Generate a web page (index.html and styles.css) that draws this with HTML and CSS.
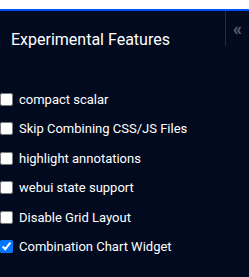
FILE: index.html
```html
<!DOCTYPE html>
<html>
<head>
<meta charset="utf-8">
<link rel="stylesheet" href="styles.css">
</head>
<body>
<div class="topbar"></div>
<div class="panel">
  <div class="header">
    <h2 class="title">Experimental Features</h2>
    <div class="divider"></div>
    <div class="collapse">«</div>
  </div>
  <ul class="features">
    <li class="feature"><input type="checkbox" class="cb"><span class="label">compact scalar</span></li>
    <li class="feature"><input type="checkbox" class="cb"><span class="label">Skip Combining CSS/JS Files</span></li>
    <li class="feature"><input type="checkbox" class="cb"><span class="label">highlight annotations</span></li>
    <li class="feature"><input type="checkbox" class="cb"><span class="label">webui state support</span></li>
    <li class="feature"><input type="checkbox" class="cb"><span class="label">Disable Grid Layout</span></li>
    <li class="feature"><input type="checkbox" class="cb" checked><span class="label">Combination Chart Widget</span></li>
  </ul>
</div>
</body>
</html>
```

FILE: styles.css
```css
html, body {
  margin: 0;
  padding: 0;
  height: 100%;
}
body {
  background: #020a1f;
  font-family: Roboto, "Liberation Sans", sans-serif;
  color: #ffffff;
  overflow: hidden;
}
.topbar {
  height: 9px;
  background: #ffffff;
  border-bottom: 2px solid #0050ff;
}
.panel {
  display: flex;
  flex-direction: column;
}
.header {
  display: flex;
  align-items: flex-start;
  height: 35px;
}
.title {
  margin: 0;
  padding: 19px 0 0 11px;
  font-size: 16px;
  font-weight: 400;
  line-height: 20px;
  flex: 1;
}
.divider {
  width: 1px;
  height: 35px;
  background: #262c3c;
}
.collapse {
  width: 23px;
  text-align: center;
  color: #5d6272;
  font-size: 18px;
  font-weight: 700;
  line-height: 18px;
  padding-top: 9px;
}
.features {
  list-style: none;
  margin: 0;
  padding: 46px 0 0 0;
  display: flex;
  flex-direction: column;
  gap: 14.4px;
}
.feature {
  display: flex;
  align-items: center;
  height: 15px;
}
.cb {
  margin: 0 6px 0 0;
  width: 13px;
  height: 13px;
}
.label {
  font-size: 13px;
  line-height: 15px;
}
```
